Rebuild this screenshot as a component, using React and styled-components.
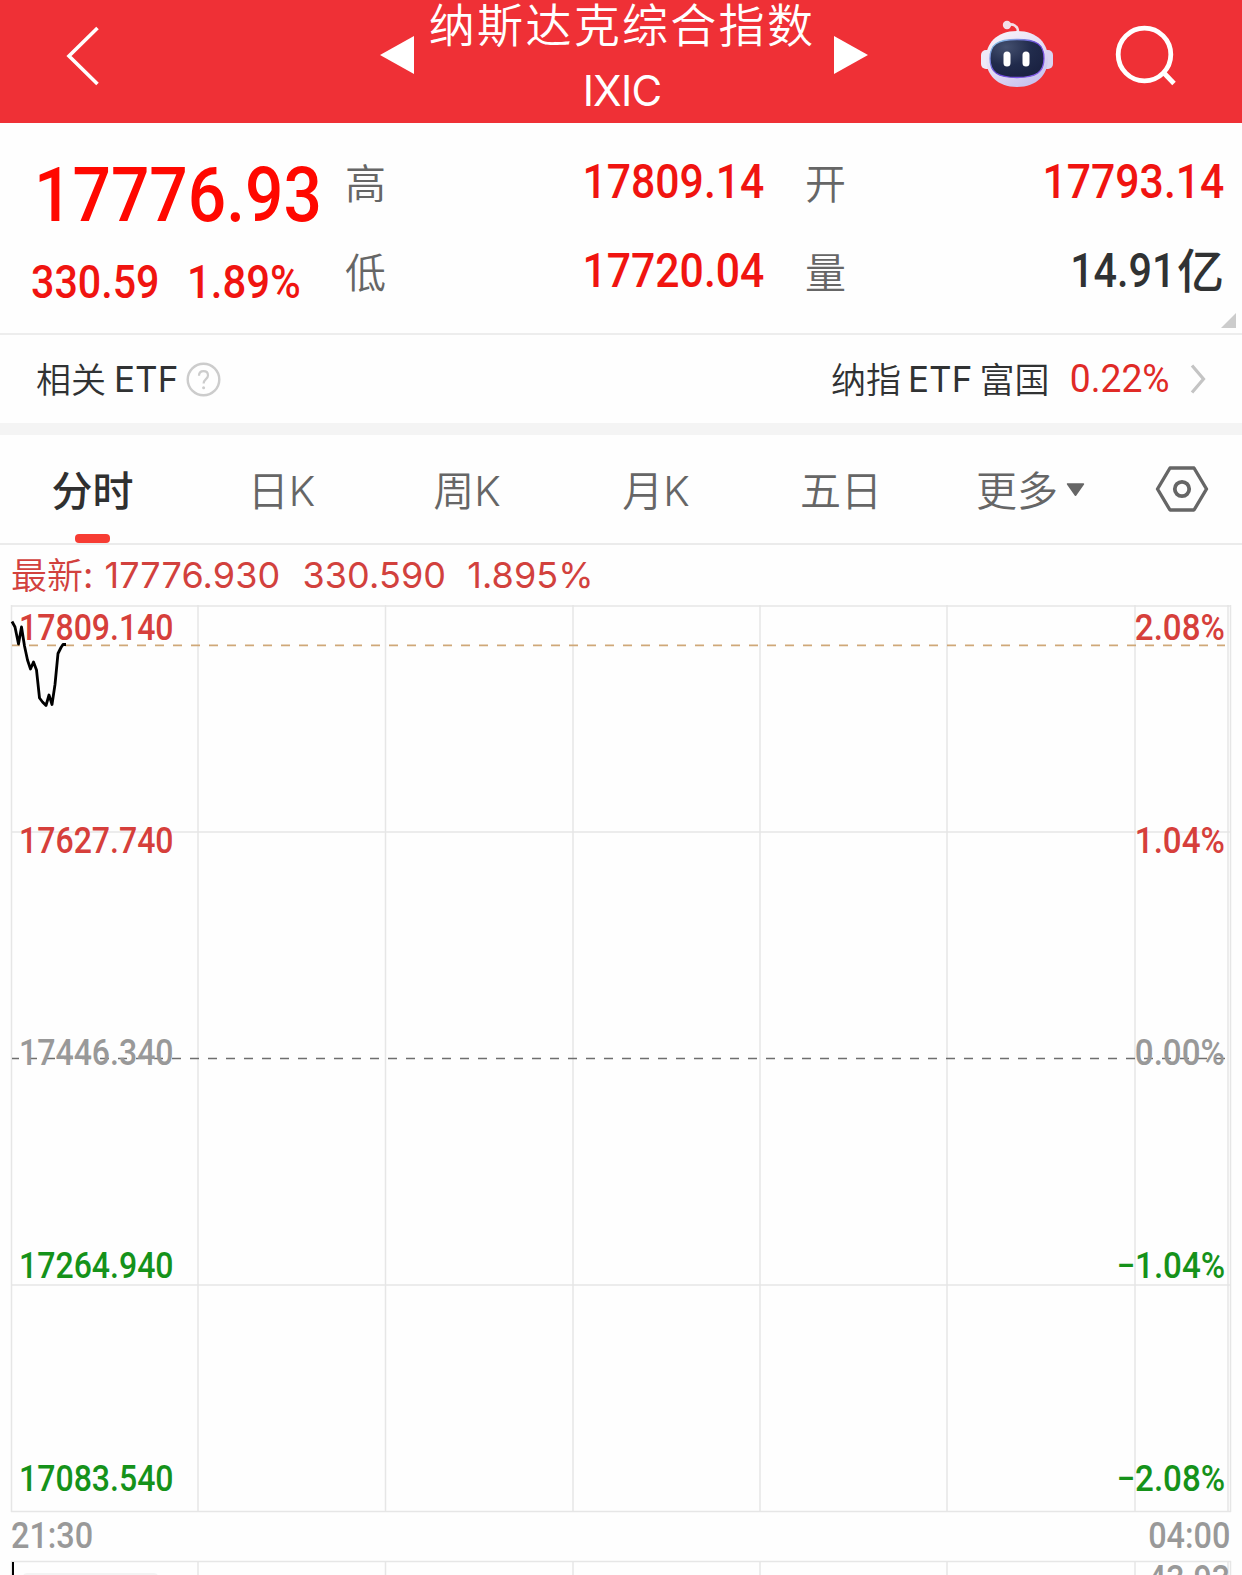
import React, { useState } from 'react';
import styled, { createGlobalStyle } from 'styled-components';

const GlobalStyle = createGlobalStyle`
  * {
    box-sizing: border-box;
  }

  body {
    margin: 0;
    background: #fefefe;
    font-family: Inter, 'Noto Sans CJK SC', sans-serif;
    overflow: hidden;
  }
`;

const Page = styled.div`
  width: 1242px;
  height: 1575px;
  overflow: hidden;
  background: #fefefe;
`;

const Header = styled.header`
  height: 123px;
  display: flex;
  align-items: flex-start;
  background: #ef3036;
  color: #fff;
`;

const IconButton = styled.button`
  display: block;
  flex: none;
  padding: 0;
  border: none;
  background: none;
  line-height: 0;
  margin: ${props => props.$margin || 0};
`;

const TitleBlock = styled.div`
  width: 386px;
  margin-left: 15px;
  margin-right: 19px;
  display: flex;
  flex-direction: column;
  align-items: center;
`;

const Title = styled.div`
  height: 48px;
  line-height: 45px;
  font-family: 'Noto Sans CJK SC', sans-serif;
  font-size: 46px;
  font-weight: 350;
  letter-spacing: 2.3px;
  white-space: nowrap;
`;

const Symbol = styled.div`
  margin-top: 22px;
  line-height: 42px;
  font-size: 42px;
  font-weight: 400;
  letter-spacing: -0.8px;
`;

// Roboto squeezed horizontally to get narrow, DIN-like figures
const Num = styled.span`
  display: inline-block;
  font-family: Roboto, 'Noto Sans CJK SC', sans-serif;
  font-size: ${props => props.$size}px;
  font-weight: ${props => props.$weight || 500};
  line-height: 1;
  color: ${props => props.$color || '#f01410'};
  white-space: pre;
  transform: scaleX(${props => props.$squeeze || 0.89});
  transform-origin: ${props => (props.$end ? 'right' : 'left')} center;
`;

const Quote = styled.section`
  position: relative;
  height: 212px;
  display: flex;
  border-bottom: 2px solid #ededed;
`;

const PriceColumn = styled.div`
  width: 345px;
  padding: 34px 0 0 31px;
  display: flex;
  flex-direction: column;
`;

const Price = styled.div`
  display: flex;
  height: 77px;
  padding-left: 3px;
`;

const Change = styled.div`
  display: flex;
  gap: 14px;
  margin-top: 26px;
`;

const StatGrid = styled.div`
  flex: 1;
  display: grid;
  grid-template-columns: 419px 1fr;
  grid-template-rows: 89px 89px;
  column-gap: 41px;
  padding: 16px 18px 0 0;
`;

const Stat = styled.div`
  display: flex;
  justify-content: space-between;
  align-items: center;
`;

const StatLabel = styled.span`
  margin-top: -4px;
  font-family: 'Noto Sans CJK SC', sans-serif;
  font-size: 41px;
  font-weight: 350;
  line-height: 1;
  color: #666;
`;

const StatValue = styled.span`
  display: flex;
  align-items: center;
  margin-top: -4px;
`;

const Unit = styled.span`
  margin-top: -6px;
  margin-left: 2px;
  font-family: 'Noto Sans CJK SC', sans-serif;
  font-size: 47px;
  font-weight: 500;
  line-height: 1;
  color: #303233;
`;

const ExpandCorner = styled.div`
  position: absolute;
  right: 6px;
  bottom: 5px;
  width: 15px;
  height: 15px;
  background: #ccc;
  clip-path: polygon(100% 0, 100% 100%, 0 100%);
`;

const EtfRow = styled.section`
  height: 100px;
  display: flex;
  align-items: center;
  justify-content: space-between;
  padding: 0 36px 0 36px;
  border-bottom: 12px solid #f4f4f4;
  color: #303233;
`;

const EtfName = styled.span`
  display: flex;
  align-items: center;
  gap: ${props => props.$gap || 7}px;
  font-size: 35px;
  line-height: 1;
`;

const Han = styled.span`
  font-family: 'Noto Sans CJK SC', sans-serif;
  font-weight: 350;
  line-height: 1;
  margin-top: -4px;
`;

const EtfQuote = styled.div`
  display: flex;
  align-items: center;
`;

const EtfChange = styled.span`
  margin: 0 20px 0 16px;
  line-height: 0;
`;

const Tabs = styled.nav`
  height: 110px;
  display: flex;
  border-bottom: 2px solid #ebebeb;
`;

const Tab = styled.button`
  position: relative;
  flex: none;
  display: flex;
  align-items: center;
  justify-content: center;
  width: ${props => props.$width}px;
  padding: 4px 2px 0 0;
  border: none;
  background: none;
  font-family: Inter, 'Noto Sans CJK SC', sans-serif;
  font-size: 41px;
  font-weight: ${props => (props.$active ? 500 : 350)};
  line-height: 1;
  color: ${props => (props.$active ? '#303030' : '#666')};

  &::after {
    content: '';
    display: ${props => (props.$active ? 'block' : 'none')};
    position: absolute;
    left: calc(50% - 18.5px);
    bottom: 0;
    width: 35px;
    height: 9px;
    border-radius: 4px;
    background: #f73c33;
  }
`;

const Latest = styled.div`
  height: 60px;
  display: flex;
  align-items: center;
  padding: 0 0 0 11px;
  font-size: 36px;
  font-weight: 400;
  color: #d2413d;
  white-space: pre;
`;

const LatestValue = styled.span`
  letter-spacing: 0.1px;
  margin-left: ${props => props.$left}px;
`;

const ChartArea = styled.section`
  position: relative;
  height: 908px;
  line-height: 0;
`;

const AxisLabels = styled.div`
  position: absolute;
  top: 5px;
  ${props => (props.$right ? 'right: 17px;' : 'left: 19px;')}
  display: flex;
  flex-direction: column;
  align-items: ${props => (props.$right ? 'flex-end' : 'flex-start')};
`;

const AxisLabel = styled.div`
  height: 212.7px;
`;

const TimeAxis = styled.div`
  display: flex;
  justify-content: space-between;
  height: 47px;
  padding: 5px 12px 0 11px;
`;

const VolumeArea = styled.section`
  position: relative;
  height: 15px;
  line-height: 0;
`;

const VolumeMax = styled.div`
  position: absolute;
  top: 1px;
  right: 12px;
`;

const RED = '#d63f3b';
const GRAY = '#999';
const GREEN = '#15921a';

const COLUMNS = [198, 385.5, 573, 760, 947, 1135, 1228, 1230.5];

const PRICES = [
  ['17809.140', '2.08%', RED],
  ['17627.740', '1.04%', RED],
  ['17446.340', '0.00%', GRAY],
  ['17264.940', '−1.04%', GREEN],
  ['17083.540', '−2.08%', GREEN],
];

const TABS = [
  { name: '分时', width: 187 },
  { name: '日K', width: 191 },
  { name: '周K', width: 180 },
  { name: '月K', width: 198 },
  { name: '五日', width: 172 },
  { name: '更多', width: 207, menu: true },
];

const BackIcon = () => (
  <svg width="36" height="64" viewBox="0 0 36 64" fill="none">
    <path d="M32.500 4 4 32l28.500 28" stroke="#fff" strokeWidth="3.6" />
  </svg>
);

const Arrow = ({ right }) => (
  <svg width="34" height="38" viewBox="0 0 34 38" fill="#fff">
    <path d={right ? 'M0 0v38L34 19z' : 'M34 0v38L0 19z'} />
  </svg>
);

const RobotIcon = () => (
  <svg width="74" height="68" viewBox="0 0 74 68" fill="none">
    <defs>
      <linearGradient id="shell" x1="0" y1="0" x2="0.6" y2="1">
        <stop offset="0" stopColor="#fbf7fb" />
        <stop offset="0.6" stopColor="#e2dbf4" />
        <stop offset="1" stopColor="#c9c3ef" />
      </linearGradient>
      <linearGradient id="rim" x1="0" y1="0" x2="1" y2="1">
        <stop offset="0" stopColor="#8edbe8" />
        <stop offset="0.5" stopColor="#6a45d8" />
        <stop offset="1" stopColor="#8b63ee" />
      </linearGradient>
      <radialGradient id="visor" cx="0.3" cy="0.2" r="0.8">
        <stop offset="0" stopColor="#44506f" />
        <stop offset="0.6" stopColor="#212b4c" />
        <stop offset="1" stopColor="#1b2343" />
      </radialGradient>
    </defs>
    <path d="M27 5c6-2 11 1 11 7" stroke="#f3dfe8" strokeWidth="2.6" />
    <circle cx="27" cy="5" r="4.200" fill="#f3dfe8" />
    <rect x="1" y="30" width="12" height="19" rx="5" fill="#eee9f7" />
    <rect x="61" y="30" width="12" height="19" rx="5" fill="#d9d4f0" />
    <path d="M37 11c21 0 31 13 31 27.500 0 16-11 28.500-31 28.500S6 54.500 6 38.500C6 24 16 11 37 11z" fill="url(#shell)" />
    <path d="M37 19.500c20 0 27 5 27 19s-8 19-27 19-27-5-27-19 7-19 27-19z" fill="url(#visor)" stroke="url(#rim)" strokeWidth="1.3" />
    <rect x="23.500" y="31.500" width="7" height="15" rx="3.5" fill="#fff" />
    <rect x="42.500" y="31.500" width="7" height="15" rx="3.5" fill="#fff" />
  </svg>
);

const SearchIcon = () => (
  <svg width="62" height="62" viewBox="0 0 62 62" fill="none" stroke="#fff" strokeWidth="4.8">
    <circle cx="29.5" cy="29.5" r="26.3" />
    <path d="M48.500 47.500 59 58.500" />
  </svg>
);

const HelpIcon = () => (
  <svg width="35" height="35" viewBox="0 0 35 35" fill="none" stroke="#ccc" strokeWidth="2.4">
    <circle cx="17.5" cy="17.5" r="15.8" />
    <path d="M13 13.800c0-2.800 1.800-4.600 4.500-4.600s4.500 1.700 4.500 4.200c0 3.600-4.400 3.900-4.400 8" strokeWidth="2.2" />
    <circle cx="17.6" cy="25.8" r="1.5" fill="#ccc" stroke="none" />
  </svg>
);

const ChevronIcon = () => (
  <svg width="16" height="30" viewBox="0 0 16 30" fill="none">
    <path d="M2 1.500 13.500 15 2 28.500" stroke="#c4c4c4" strokeWidth="3.2" />
  </svg>
);

const CaretIcon = () => (
  <svg width="19" height="14" viewBox="0 0 19 14">
    <path d="M1.600 1h15.800L9.500 12.200z" fill="#666" stroke="#666" strokeWidth="1.6" strokeLinejoin="round" />
  </svg>
);

const SettingsIcon = () => (
  <svg width="54" height="48" viewBox="0 0 54 48" fill="none" stroke="#666" strokeWidth="3.4">
    <path d="M15 3h24l12.500 21L39 45H15L2.500 24z" strokeLinejoin="round" />
    <circle cx="27" cy="24" r="7.2" strokeWidth="3.8" />
  </svg>
);

const PriceChart = () => (
  <svg width="1242" height="908" viewBox="0 605 1242 908" fill="none">
    <g stroke="#e6e6e6" strokeWidth="1.5">
      <path d="M11 606h1220M11 832h1220M11 1285h1220M11 1511.500h1220M11.500 605v907" />
      {COLUMNS.map(x => (
        <path key={x} d={`M${x} 605v907`} />
      ))}
    </g>
    <path d="M12 645.300h1213" stroke="#cfa878" strokeWidth="1.7" strokeDasharray="9 9" strokeDashoffset="1" />
    <path d="M12 1058.500h1213" stroke="#6e6e6e" strokeWidth="1.7" strokeDasharray="9 9" strokeDashoffset="2" />
  </svg>
);

const Trend = styled.svg`
  position: absolute;
  top: 0;
  left: 0;
`;

const App = () => {
  const [active, setActive] = useState('分时');

  return (
    <Page>
      <GlobalStyle />
      <Header>
        <IconButton $margin="24px 0 0 65px"><BackIcon /></IconButton>
        <IconButton $margin="36px 0 0 279px"><Arrow /></IconButton>
        <TitleBlock>
          <Title>纳斯达克综合指数</Title>
          <Symbol>IXIC</Symbol>
        </TitleBlock>
        <IconButton $margin="36px 0 0 0"><Arrow right /></IconButton>
        <IconButton $margin="20px 0 0 112px"><RobotIcon /></IconButton>
        <IconButton $margin="25px 0 0 61px"><SearchIcon /></IconButton>
      </Header>

      <Quote>
        <PriceColumn>
          <Price>
            <Num $size={76} $color="#ff0800">17776.93</Num>
          </Price>
          <Change>
            <Num $size={45.5} $squeeze={0.905}>330.59</Num>
            <Num $size={45.5} $squeeze={0.92}>1.89%</Num>
          </Change>
        </PriceColumn>
        <StatGrid>
          <Stat>
            <StatLabel>高</StatLabel>
            <StatValue><Num $end $size={48}>17809.14</Num></StatValue>
          </Stat>
          <Stat>
            <StatLabel>开</StatLabel>
            <StatValue><Num $end $size={48}>17793.14</Num></StatValue>
          </Stat>
          <Stat>
            <StatLabel>低</StatLabel>
            <StatValue><Num $end $size={48}>17720.04</Num></StatValue>
          </Stat>
          <Stat>
            <StatLabel>量</StatLabel>
            <StatValue>
              <Num $end $size={48} $squeeze={0.86} $color="#303233">14.91</Num>
              <Unit>亿</Unit>
            </StatValue>
          </Stat>
        </StatGrid>
        <ExpandCorner />
      </Quote>

      <EtfRow>
        <EtfName $gap={8}>
          <Han>相关</Han>ETF<HelpIcon />
        </EtfName>
        <EtfQuote>
          <EtfName>
            <Han>纳指</Han>ETF<Han>富国</Han>
          </EtfName>
          <EtfChange>
            <Num $end $size={39} $weight={400} $squeeze={0.955} $color="#e02a26">0.22%</Num>
          </EtfChange>
          <ChevronIcon />
        </EtfQuote>
      </EtfRow>

      <Tabs>
        {TABS.map(tab => (
          <Tab
            key={tab.name}
            $width={tab.width}
            $active={active === tab.name}
            onClick={() => setActive(tab.name)}
          >
            {tab.name}
            {tab.menu && <IconButton as="span" $margin="-4px 0 0 8px"><CaretIcon /></IconButton>}
          </Tab>
        ))}
        <IconButton $margin="0 0 0 20px"><SettingsIcon /></IconButton>
      </Tabs>

      <Latest>
        <Han>最新</Han>:
        <LatestValue $left={11}>17776.930</LatestValue>
        <LatestValue $left={22}>330.590</LatestValue>
        <LatestValue $left={21}>1.895%</LatestValue>
      </Latest>

      <ChartArea>
        <PriceChart />
        <AxisLabels>
          {PRICES.map(([price, , color]) => (
            <AxisLabel key={price}><Num $size={36} $color={color}>{price}</Num></AxisLabel>
          ))}
        </AxisLabels>
        <AxisLabels $right>
          {PRICES.map(([price, percent, color]) => (
            <AxisLabel key={price}><Num $end $size={36} $squeeze={0.92} $color={color}>{percent}</Num></AxisLabel>
          ))}
        </AxisLabels>
        <Trend width="80" height="120" viewBox="0 605 80 120" fill="none">
          <path
            d="M12 621.500l3 5.500 3.500 17 3-17 3 19 3 14 3 9 3-7 3 8 3 28 3 4 3.500 3.500 3-10.500 3 9.500 3-20 3-31 3-6 2-3h3"
            stroke="#000"
            strokeWidth="2.8"
            strokeLinejoin="round"
          />
        </Trend>
      </ChartArea>

      <TimeAxis>
        <Num $size={36} $squeeze={0.9} $color={GRAY}>21:30</Num>
        <Num $end $size={36} $squeeze={0.9} $color={GRAY}>04:00</Num>
      </TimeAxis>

      <VolumeArea>
        <svg width="1242" height="15" viewBox="0 1560 1242 15" fill="none">
          <path d="M11 1561.500h1220M11.500 1561v14" stroke="#e6e6e6" strokeWidth="1.5" />
          {COLUMNS.map(x => (
            <path key={x} d={`M${x} 1561v14`} stroke="#e6e6e6" strokeWidth="1.5" />
          ))}
          <path d="M13 1562v13" stroke="#000" strokeWidth="2" />
          <rect x="23" y="1573" width="135" height="20" rx="4" fill="#f3f3f3" />
        </svg>
        <VolumeMax><Num $end $size={36} $color={GRAY}>43.93</Num></VolumeMax>
      </VolumeArea>
    </Page>
  );
};

export default App;
